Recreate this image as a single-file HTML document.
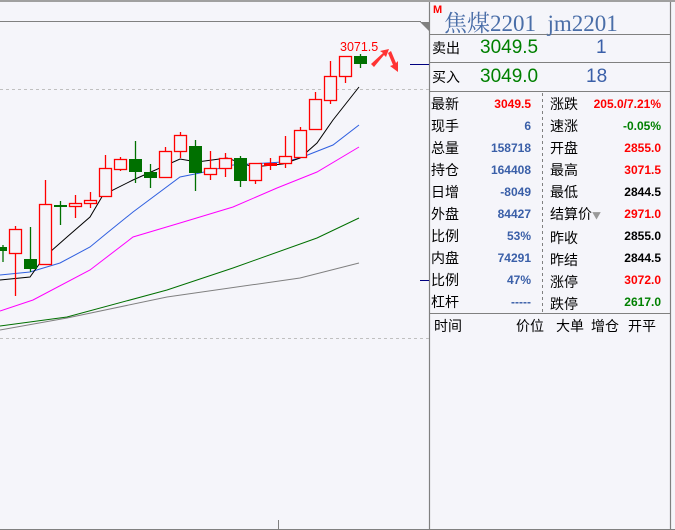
<!DOCTYPE html>
<html><head><meta charset="utf-8"><style>
body{margin:0;width:675px;height:530px;background:#f5f5fa;position:relative;overflow:hidden;font-family:"Liberation Sans","Noto Sans CJK SC",sans-serif}
.a{position:absolute;white-space:nowrap}
.l{font-size:14px;color:#000;font-family:"Noto Sans CJK SC","WenQuanYi Zen Hei",sans-serif}
.v{font-size:12px;font-weight:bold;text-align:right}
.b{color:#3a5fa8}.r{color:#f00}.g{color:#008000}.k{color:#000}
</style></head><body>
<div class="a" style="left:0;top:0;width:675px;height:2px;background:#a0a0a0"></div>
<svg class="a" style="left:0;top:0" width="675" height="530">
<line x1="0" y1="21.5" x2="421" y2="21.5" stroke="#808080"/>
<polygon points="420,22 429,22 429,31" fill="#808080"/>
<line x1="429.5" y1="2" x2="429.5" y2="530" stroke="#808080" stroke-width="1.2"/>
<line x1="670.5" y1="2" x2="670.5" y2="530" stroke="#808080" stroke-width="1.2"/>
<line x1="0" y1="529.5" x2="675" y2="529.5" stroke="#808080"/>
<line x1="278.5" y1="520" x2="278.5" y2="529" stroke="#808080"/>
<line x1="0" y1="89.5" x2="429" y2="89.5" stroke="#c0c0c0" stroke-dasharray="3,3"/>
<line x1="0" y1="338.5" x2="429" y2="338.5" stroke="#c0c0c0" stroke-dasharray="3,3"/>
<line x1="410" y1="64.5" x2="429" y2="64.5" stroke="#000080"/>
<line x1="420" y1="280.5" x2="429" y2="280.5" stroke="#000080"/>
<line x1="430" y1="34.5" x2="670" y2="34.5" stroke="#808080"/>
<line x1="430" y1="62.5" x2="670" y2="62.5" stroke="#808080"/>
<line x1="430" y1="91.5" x2="670" y2="91.5" stroke="#808080"/>
<line x1="430" y1="313.5" x2="670" y2="313.5" stroke="#808080"/>
<line x1="542.5" y1="93" x2="542.5" y2="312" stroke="#808080" stroke-dasharray="3,3"/>
<g stroke-width="1" fill="none">
<polyline stroke="#808080" points="0,330 67,318 167,297 300,278 359,263"/>
<polyline stroke="#007000" points="0,326 67,317 167,290 233,268 317,238 359,218"/>
<polyline stroke="#ff00ff" points="0,311 33,300 90,270 133,237 180,223 233,207 277,188 317,172 359,147"/>
<polyline stroke="#3060e0" points="0,275 30,272 60,263 90,247 107,233 133,212 180,177 200,173 233,165 283,162 300,158 333,145 359,125"/>
<polyline stroke="#000" points="0,280 30,277 40,263 50,252 67,237 90,217 103,195 133,180 180,159 197,162 227,158 253,167 283,164 300,158 317,143 333,120 359,87"/>
</g>
<g stroke-width="1.3">
<line x1="3" y1="245" x2="3" y2="262" stroke="#007000"/><rect x="0" y="247" width="7" height="4" fill="#007000"/>
<line x1="15.5" y1="226" x2="15.5" y2="296" stroke="#f00"/><rect x="9.5" y="229.5" width="12" height="24" fill="#f5f5fa" stroke="#f00"/>
<line x1="30.5" y1="227" x2="30.5" y2="272" stroke="#007000"/><rect x="24" y="259" width="13" height="10" fill="#007000"/>
<line x1="45.5" y1="180" x2="45.5" y2="264" stroke="#f00"/><rect x="39.5" y="204.5" width="12" height="60" fill="#f5f5fa" stroke="#f00"/>
<line x1="60.5" y1="201" x2="60.5" y2="225" stroke="#007000"/><rect x="54" y="205" width="13" height="2" fill="#007000"/>
<line x1="75.5" y1="195" x2="75.5" y2="218" stroke="#f00"/><rect x="69.5" y="203.5" width="12" height="3" fill="#f5f5fa" stroke="#f00"/>
<line x1="90.5" y1="192" x2="90.5" y2="208" stroke="#f00"/><rect x="84.5" y="200.5" width="12" height="3" fill="#f5f5fa" stroke="#f00"/>
<line x1="105.5" y1="155" x2="105.5" y2="196" stroke="#f00"/><rect x="99.5" y="168.5" width="12" height="28" fill="#f5f5fa" stroke="#f00"/>
<line x1="120.5" y1="157" x2="120.5" y2="171" stroke="#f00"/><rect x="114.5" y="159.5" width="12" height="10" fill="#f5f5fa" stroke="#f00"/>
<line x1="135.5" y1="141" x2="135.5" y2="183" stroke="#007000"/><rect x="129" y="159" width="13" height="13" fill="#007000"/>
<line x1="150.5" y1="164" x2="150.5" y2="188" stroke="#007000"/><rect x="144" y="172" width="13" height="6" fill="#007000"/>
<line x1="165.5" y1="147" x2="165.5" y2="178" stroke="#f00"/><rect x="159.5" y="151.5" width="12" height="26" fill="#f5f5fa" stroke="#f00"/>
<line x1="180.5" y1="132" x2="180.5" y2="158" stroke="#f00"/><rect x="174.5" y="135.5" width="12" height="16" fill="#f5f5fa" stroke="#f00"/>
<line x1="195.5" y1="140" x2="195.5" y2="191" stroke="#007000"/><rect x="189" y="146" width="13" height="27" fill="#007000"/>
<line x1="210.5" y1="151" x2="210.5" y2="180" stroke="#f00"/><rect x="204.5" y="168.5" width="12" height="6" fill="#f5f5fa" stroke="#f00"/>
<line x1="225.5" y1="153" x2="225.5" y2="177" stroke="#f00"/><rect x="219.5" y="158.5" width="12" height="10" fill="#f5f5fa" stroke="#f00"/>
<line x1="240.5" y1="156" x2="240.5" y2="187" stroke="#007000"/><rect x="234" y="158" width="13" height="23" fill="#007000"/>
<line x1="255.5" y1="163" x2="255.5" y2="184" stroke="#f00"/><rect x="249.5" y="163.5" width="12" height="17" fill="#f5f5fa" stroke="#f00"/>
<line x1="270.5" y1="158" x2="270.5" y2="170" stroke="#f00"/><rect x="264" y="163" width="13" height="3" fill="#f00"/>
<line x1="285.5" y1="136" x2="285.5" y2="168" stroke="#f00"/><rect x="279.5" y="156.5" width="12" height="7" fill="#f5f5fa" stroke="#f00"/>
<line x1="300.5" y1="127" x2="300.5" y2="157" stroke="#f00"/><rect x="294.5" y="130.5" width="12" height="27" fill="#f5f5fa" stroke="#f00"/>
<line x1="315.5" y1="92" x2="315.5" y2="129" stroke="#f00"/><rect x="309.5" y="99.5" width="12" height="30" fill="#f5f5fa" stroke="#f00"/>
<line x1="330.5" y1="61" x2="330.5" y2="104" stroke="#f00"/><rect x="324.5" y="76.5" width="12" height="24" fill="#f5f5fa" stroke="#f00"/>
<line x1="345.5" y1="56" x2="345.5" y2="83" stroke="#f00"/><rect x="339.5" y="56.5" width="12" height="20" fill="#f5f5fa" stroke="#f00"/>
<line x1="360.5" y1="54" x2="360.5" y2="68" stroke="#007000"/><rect x="354" y="56" width="13" height="8" fill="#007000"/>
</g>
<polygon points="371,64 383,53 380,51 389,49 386,57 384,55 374,67" fill="#f33"/>
<polygon points="388,53 391,51 396,63 398,61 398,72 390,66 393,65" fill="#f33"/>
<text x="340" y="51" font-size="12.5" fill="#f00" font-family="Liberation Sans,sans-serif">3071.5</text>
</svg>
<div class="a" style="left:433px;top:4px;font-size:11px;font-weight:bold;color:#f00">M</div>
<div class="a" style="left:444px;top:5px;font-size:23px;color:#4a6ea8;font-family:'Liberation Serif','Noto Serif CJK SC',serif">焦煤2201&nbsp;&nbsp;jm2201</div>
<div class="a l" style="left:432px;top:38px;font-size:14px">卖出</div>
<div class="a" style="left:480px;top:37px;font-size:19px;color:#008000">3049.5</div>
<div class="a" style="left:596px;top:37px;font-size:19px;color:#3a5fa8">1</div>
<div class="a l" style="left:432px;top:67px">买入</div>
<div class="a" style="left:480px;top:66px;font-size:19px;color:#008000">3049.0</div>
<div class="a" style="left:586px;top:66px;font-size:19px;color:#3a5fa8">18</div>
<div class="a" style="left:431px;top:93px;width:100px;line-height:22px">
<div class="l">最新</div><div class="l">现手</div><div class="l">总量</div><div class="l">持仓</div><div class="l">日增</div><div class="l">外盘</div><div class="l">比例</div><div class="l">内盘</div><div class="l">比例</div><div class="l">杠杆</div></div>
<div class="a v" style="left:470px;top:93px;width:61px;line-height:22px">
<div class="r">3049.5</div><div class="b">6</div><div class="b">158718</div><div class="b">164408</div><div class="b">-8049</div><div class="b">84427</div><div class="b">53%</div><div class="b">74291</div><div class="b">47%</div><div class="b">-----</div></div>
<div class="a" style="left:550px;top:93px;line-height:22px">
<div class="l">涨跌</div><div class="l">速涨</div><div class="l">开盘</div><div class="l">最高</div><div class="l">最低</div><div class="l">结算价<span style="color:#999;font-size:9px">▼</span></div><div class="l">昨收</div><div class="l">昨结</div><div class="l">涨停</div><div class="l">跌停</div></div>
<div class="a v" style="left:580px;top:93px;width:81px;line-height:22px">
<div class="r">205.0/7.21%</div><div class="g">-0.05%</div><div class="r">2855.0</div><div class="r">3071.5</div><div class="k">2844.5</div><div class="r">2971.0</div><div class="k">2855.0</div><div class="k">2844.5</div><div class="r">3072.0</div><div class="g">2617.0</div></div>
<div class="a l" style="left:434px;top:316px">时间</div>
<div class="a l" style="left:516px;top:316px">价位</div>
<div class="a l" style="left:556px;top:316px">大单</div>
<div class="a l" style="left:591px;top:316px">增仓</div>
<div class="a l" style="left:628px;top:316px">开平</div>
</body></html>
